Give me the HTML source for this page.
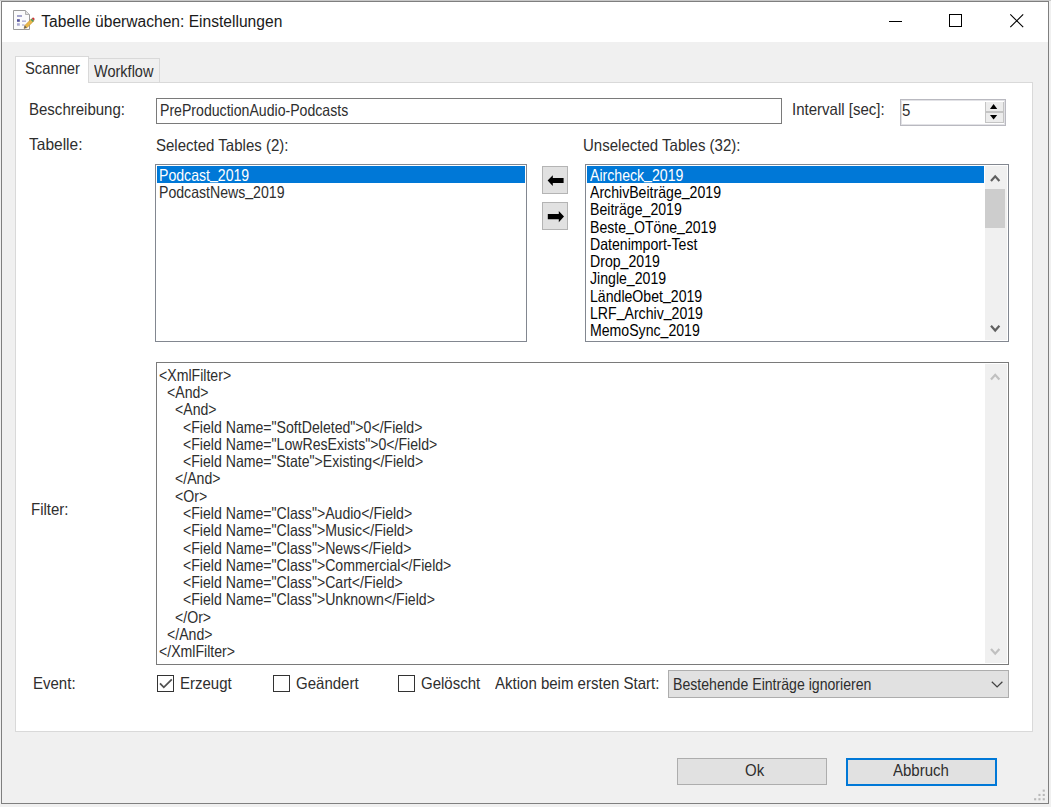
<!DOCTYPE html>
<html><head><meta charset="utf-8"><style>
html,body{margin:0;padding:0;}
body{width:1051px;height:807px;position:relative;overflow:hidden;background:#f0f0f0;font-family:"Liberation Sans",sans-serif;}
.t{position:absolute;white-space:pre;transform-origin:0 0;}
.b{position:absolute;}
.u{position:relative;top:-1.5px;}
</style></head><body>
<div class="b" style="left:0px;top:0px;width:1051px;height:1px;background:#c8c8c8;"></div>
<div class="b" style="left:1px;top:1px;width:1048px;height:803px;background:#f0f0f0;border:1px solid #7f7f7f;box-sizing:border-box;"></div>
<div class="b" style="left:2px;top:2px;width:1046px;height:40px;background:#fff;"></div>
<svg class="b" style="left:0px;top:0px" width="40" height="32" viewBox="0 0 40 32">
<path d="M13.5 10.5 H25.5 L29.5 14.5 V29.5 H13.5 Z" fill="#fbfbfb" stroke="#9a9a9a" stroke-width="1"/>
<path d="M25.5 10.5 V14.5 H29.5" fill="#e0e0e0" stroke="#b0b0b0" stroke-width="1"/>
<rect x="17" y="15.3" width="5" height="1.4" fill="#8080b8"/>
<rect x="17" y="19.2" width="2.8" height="2.6" fill="#50509a"/>
<rect x="22" y="20.6" width="4" height="1.1" fill="#9a9ac8"/>
<rect x="17" y="23.2" width="2.8" height="2.5" fill="#a8a8d0"/>
<rect x="22" y="24.5" width="2.5" height="1" fill="#9a9ac8"/>
<path d="M24 28.5 L24.8 25.5 L31.3 19 L33.5 21.2 L27 27.7 Z" fill="#e8b84a" stroke="#c89030" stroke-width="0.6"/>
<path d="M30.6 19.7 L31.8 18.5 L34 20.7 L32.8 21.9 Z" fill="#4a9a5a"/>
<path d="M31.8 18.5 L32.5 17.8 Q33.5 17.3 34.3 18.2 Q34.8 19.1 34.4 19.9 L34 20.7 Z" fill="#c83a3a"/>
<path d="M24 28.5 L24.8 25.5 L26.9 27.6 Z" fill="#606060"/>
</svg>
<div class="t" style="left:41.3px;top:13.79px;font-size:15.6px;line-height:15.6px;color:#1a1a1a;">Tabelle überwachen: Einstellungen</div>
<div class="b" style="left:889px;top:21px;width:13px;height:1px;background:#000;"></div>
<div class="b" style="left:949px;top:14px;width:13px;height:13px;background:transparent;border:1px solid #000;box-sizing:border-box;"></div>
<svg class="b" style="left:1009px;top:13px" width="16" height="16" viewBox="0 0 16 16"><path d="M1.3 1.3 L14.2 14.2 M14.2 1.3 L1.3 14.2" stroke="#000" stroke-width="1.1"/></svg>
<div class="b" style="left:88px;top:58px;width:72px;height:25px;background:#f0f0f0;border:1px solid #d9d9d9;box-sizing:border-box;"></div>
<div class="b" style="left:15px;top:82px;width:1018px;height:650px;background:#fff;border:1px solid #d9d9d9;box-sizing:border-box;"></div>
<div class="b" style="left:15px;top:56px;width:74px;height:27px;background:#fff;border:1px solid #d9d9d9;box-sizing:border-box;border-bottom:none;"></div>
<div class="t" style="left:25px;top:60.03px;font-size:16.5px;line-height:16.5px;color:#2e2e2e;transform:scaleX(0.895);">Scanner</div>
<div class="t" style="left:94px;top:62.83px;font-size:16.5px;line-height:16.5px;color:#2e2e2e;transform:scaleX(0.88);">Workflow</div>
<div class="t" style="left:29px;top:101.03px;font-size:16.5px;line-height:16.5px;color:#2e2e2e;transform:scaleX(0.91);">Beschreibung:</div>
<div class="b" style="left:156px;top:98px;width:626px;height:26px;background:#fff;border:1px solid #7a7a7a;box-sizing:border-box;"></div>
<div class="t" style="left:160.3px;top:102.33px;font-size:16.5px;line-height:16.5px;color:#2e2e2e;transform:scaleX(0.855);">PreProductionAudio-Podcasts</div>
<div class="t" style="left:792px;top:101.03px;font-size:16.5px;line-height:16.5px;color:#2e2e2e;transform:scaleX(0.91);">Intervall [sec]:</div>
<div class="b" style="left:900px;top:99px;width:106px;height:27px;background:#fff;border:1px solid #b9b9c0;box-sizing:border-box;"></div>
<div class="b" style="left:901px;top:100px;width:104px;height:25px;background:transparent;border:1px solid #e2e2e6;box-sizing:border-box;"></div>
<div class="t" style="left:902px;top:102.03px;font-size:16.5px;line-height:16.5px;color:#2e2e2e;transform:scaleX(0.91);">5</div>
<div class="b" style="left:985px;top:102px;width:19px;height:21px;background:#ececec;border:1px solid #c4c4c4;box-sizing:border-box;border-top:none;"></div>
<div class="b" style="left:986px;top:111px;width:17px;height:2px;background:#c4c4c4;"></div>
<svg class="b" style="left:985px;top:100px" width="19" height="24" viewBox="985 100 19 24"><path d="M990 109 L993.6 104 L997.2 109 Z" fill="#000"/><path d="M990 115 L993.6 119.6 L997.2 115 Z" fill="#000"/></svg>
<div class="t" style="left:29px;top:135.83px;font-size:16.5px;line-height:16.5px;color:#2e2e2e;transform:scaleX(0.94);">Tabelle:</div>
<div class="t" style="left:156px;top:137.03px;font-size:16.5px;line-height:16.5px;color:#2e2e2e;transform:scaleX(0.91);">Selected Tables (2):</div>
<div class="t" style="left:583px;top:137.33px;font-size:16.5px;line-height:16.5px;color:#2e2e2e;transform:scaleX(0.91);">Unselected Tables (32):</div>
<div class="b" style="left:155px;top:164px;width:372px;height:178px;background:#fff;border:1px solid #828790;box-sizing:border-box;"></div>
<div class="b" style="left:157px;top:166px;width:368px;height:17px;background:#0078d7;"></div>
<div class="t" style="left:159.4px;top:166.63px;font-size:16.5px;line-height:16.5px;color:#fff;transform:scaleX(0.855);">Podcast<span class="u">_</span>2019</div>
<div class="t" style="left:159.4px;top:183.93px;font-size:16.5px;line-height:16.5px;color:#2e2e2e;transform:scaleX(0.855);">PodcastNews<span class="u">_</span>2019</div>
<div class="b" style="left:542px;top:166px;width:26px;height:28px;background:#e1e1e1;border:1px solid #b4b4b4;box-sizing:border-box;"></div>
<div class="b" style="left:542px;top:202px;width:26px;height:28px;background:#e1e1e1;border:1px solid #b4b4b4;box-sizing:border-box;"></div>
<svg class="b" style="left:543px;top:167px" width="24" height="62" viewBox="543 167 24 62"><path d="M547.6 180.6 L552.8 175.2 V178.1 H563.6 V183.1 H552.8 V186 Z" fill="#000"/><path d="M564 216.6 L558.8 211 V214.1 H547.8 V219.2 H558.8 V222.2 Z" fill="#000"/></svg>
<div class="b" style="left:585px;top:164px;width:424px;height:178px;background:#fff;border:1px solid #828790;box-sizing:border-box;"></div>
<div class="b" style="left:587px;top:166px;width:397px;height:17px;background:#0078d7;"></div>
<div class="t" style="left:590.3px;top:166.63px;font-size:16.5px;line-height:16.5px;color:#fff;transform:scaleX(0.855);">Aircheck<span class="u">_</span>2019</div>
<div class="t" style="left:590.3px;top:183.92px;font-size:16.5px;line-height:16.5px;color:#000;transform:scaleX(0.855);">ArchivBeiträge<span class="u">_</span>2019</div>
<div class="t" style="left:590.3px;top:201.21px;font-size:16.5px;line-height:16.5px;color:#000;transform:scaleX(0.855);">Beiträge<span class="u">_</span>2019</div>
<div class="t" style="left:590.3px;top:218.50px;font-size:16.5px;line-height:16.5px;color:#000;transform:scaleX(0.855);">Beste<span class="u">_</span>OTöne<span class="u">_</span>2019</div>
<div class="t" style="left:590.3px;top:235.79px;font-size:16.5px;line-height:16.5px;color:#000;transform:scaleX(0.855);">Datenimport-Test</div>
<div class="t" style="left:590.3px;top:253.08px;font-size:16.5px;line-height:16.5px;color:#000;transform:scaleX(0.855);">Drop<span class="u">_</span>2019</div>
<div class="t" style="left:590.3px;top:270.37px;font-size:16.5px;line-height:16.5px;color:#000;transform:scaleX(0.855);">Jingle<span class="u">_</span>2019</div>
<div class="t" style="left:590.3px;top:287.66px;font-size:16.5px;line-height:16.5px;color:#000;transform:scaleX(0.855);">LändleObet<span class="u">_</span>2019</div>
<div class="t" style="left:590.3px;top:304.95px;font-size:16.5px;line-height:16.5px;color:#000;transform:scaleX(0.855);">LRF<span class="u">_</span>Archiv<span class="u">_</span>2019</div>
<div class="t" style="left:590.3px;top:322.24px;font-size:16.5px;line-height:16.5px;color:#000;transform:scaleX(0.855);">MemoSync<span class="u">_</span>2019</div>
<div class="b" style="left:985px;top:166px;width:22px;height:174px;background:#f0f0f0;"></div>
<div class="b" style="left:985px;top:189px;width:20px;height:39px;background:#cdcdcd;"></div>
<svg class="b" style="left:985px;top:166px" width="22" height="174" viewBox="985 166 22 174"><path d="M991 181 L995.2 176.3 L999.4 181" fill="none" stroke="#606060" stroke-width="2.2"/><path d="M991 325.8 L995.2 330.5 L999.4 325.8" fill="none" stroke="#606060" stroke-width="2.2"/></svg>
<div class="b" style="left:156px;top:362px;width:853px;height:303px;background:#fff;border:1px solid #7a7a7a;box-sizing:border-box;"></div>
<div class="b" style="left:985px;top:364px;width:22px;height:299px;background:#f0f0f0;"></div>
<svg class="b" style="left:985px;top:364px" width="22" height="299" viewBox="985 364 22 299"><path d="M991 379.5 L995.2 374.8 L999.4 379.5" fill="none" stroke="#c0c0c0" stroke-width="2.2"/><path d="M991 649 L995.2 653.7 L999.4 649" fill="none" stroke="#c0c0c0" stroke-width="2.2"/></svg>
<div class="t" style="left:159.4px;top:366.73px;font-size:16.5px;line-height:16.5px;color:#2e2e2e;transform:scaleX(0.855);">&lt;XmlFilter&gt;</div>
<div class="t" style="left:167.4px;top:384.01px;font-size:16.5px;line-height:16.5px;color:#2e2e2e;transform:scaleX(0.855);">&lt;And&gt;</div>
<div class="t" style="left:175.4px;top:401.29px;font-size:16.5px;line-height:16.5px;color:#2e2e2e;transform:scaleX(0.855);">&lt;And&gt;</div>
<div class="t" style="left:183.4px;top:418.57px;font-size:16.5px;line-height:16.5px;color:#2e2e2e;transform:scaleX(0.855);">&lt;Field Name=&quot;SoftDeleted&quot;&gt;0&lt;/Field&gt;</div>
<div class="t" style="left:183.4px;top:435.85px;font-size:16.5px;line-height:16.5px;color:#2e2e2e;transform:scaleX(0.855);">&lt;Field Name=&quot;LowResExists&quot;&gt;0&lt;/Field&gt;</div>
<div class="t" style="left:183.4px;top:453.13px;font-size:16.5px;line-height:16.5px;color:#2e2e2e;transform:scaleX(0.855);">&lt;Field Name=&quot;State&quot;&gt;Existing&lt;/Field&gt;</div>
<div class="t" style="left:175.4px;top:470.41px;font-size:16.5px;line-height:16.5px;color:#2e2e2e;transform:scaleX(0.855);">&lt;/And&gt;</div>
<div class="t" style="left:175.4px;top:487.69px;font-size:16.5px;line-height:16.5px;color:#2e2e2e;transform:scaleX(0.855);">&lt;Or&gt;</div>
<div class="t" style="left:183.4px;top:504.97px;font-size:16.5px;line-height:16.5px;color:#2e2e2e;transform:scaleX(0.855);">&lt;Field Name=&quot;Class&quot;&gt;Audio&lt;/Field&gt;</div>
<div class="t" style="left:183.4px;top:522.25px;font-size:16.5px;line-height:16.5px;color:#2e2e2e;transform:scaleX(0.855);">&lt;Field Name=&quot;Class&quot;&gt;Music&lt;/Field&gt;</div>
<div class="t" style="left:183.4px;top:539.53px;font-size:16.5px;line-height:16.5px;color:#2e2e2e;transform:scaleX(0.855);">&lt;Field Name=&quot;Class&quot;&gt;News&lt;/Field&gt;</div>
<div class="t" style="left:183.4px;top:556.81px;font-size:16.5px;line-height:16.5px;color:#2e2e2e;transform:scaleX(0.855);">&lt;Field Name=&quot;Class&quot;&gt;Commercial&lt;/Field&gt;</div>
<div class="t" style="left:183.4px;top:574.09px;font-size:16.5px;line-height:16.5px;color:#2e2e2e;transform:scaleX(0.855);">&lt;Field Name=&quot;Class&quot;&gt;Cart&lt;/Field&gt;</div>
<div class="t" style="left:183.4px;top:591.37px;font-size:16.5px;line-height:16.5px;color:#2e2e2e;transform:scaleX(0.855);">&lt;Field Name=&quot;Class&quot;&gt;Unknown&lt;/Field&gt;</div>
<div class="t" style="left:175.4px;top:608.65px;font-size:16.5px;line-height:16.5px;color:#2e2e2e;transform:scaleX(0.855);">&lt;/Or&gt;</div>
<div class="t" style="left:167.4px;top:625.93px;font-size:16.5px;line-height:16.5px;color:#2e2e2e;transform:scaleX(0.855);">&lt;/And&gt;</div>
<div class="t" style="left:159.4px;top:643.21px;font-size:16.5px;line-height:16.5px;color:#2e2e2e;transform:scaleX(0.855);">&lt;/XmlFilter&gt;</div>
<div class="t" style="left:31px;top:501.03px;font-size:16.5px;line-height:16.5px;color:#2e2e2e;transform:scaleX(0.91);">Filter:</div>
<div class="t" style="left:33px;top:674.53px;font-size:16.5px;line-height:16.5px;color:#2e2e2e;transform:scaleX(0.91);">Event:</div>
<div class="b" style="left:157px;top:675px;width:17px;height:17px;background:#fff;border:1px solid #333;box-sizing:border-box;"></div>
<div class="b" style="left:273px;top:675px;width:17px;height:17px;background:#fff;border:1px solid #333;box-sizing:border-box;"></div>
<div class="b" style="left:398px;top:675px;width:17px;height:17px;background:#fff;border:1px solid #333;box-sizing:border-box;"></div>
<svg class="b" style="left:157px;top:675px" width="18" height="18" viewBox="157 675 18 18"><path d="M160 683.4 L163.8 687.3 L171.8 679.3" fill="none" stroke="#505050" stroke-width="1.8"/></svg>
<div class="t" style="left:180px;top:674.53px;font-size:16.5px;line-height:16.5px;color:#2e2e2e;transform:scaleX(0.91);">Erzeugt</div>
<div class="t" style="left:296px;top:674.53px;font-size:16.5px;line-height:16.5px;color:#2e2e2e;transform:scaleX(0.91);">Geändert</div>
<div class="t" style="left:421px;top:674.53px;font-size:16.5px;line-height:16.5px;color:#2e2e2e;transform:scaleX(0.91);">Gelöscht</div>
<div class="t" style="left:495px;top:674.53px;font-size:16.5px;line-height:16.5px;color:#2e2e2e;transform:scaleX(0.91);">Aktion beim ersten Start:</div>
<div class="b" style="left:668px;top:670px;width:341px;height:28px;background:#e1e1e1;border:1px solid #adadad;box-sizing:border-box;"></div>
<div class="t" style="left:673px;top:675.73px;font-size:16.5px;line-height:16.5px;color:#2e2e2e;transform:scaleX(0.855);">Bestehende Einträge ignorieren</div>
<svg class="b" style="left:985px;top:675px" width="22" height="18" viewBox="985 675 22 18"><path d="M991.8 681.8 L997.1 686.9 L1002.4 681.8" fill="none" stroke="#404040" stroke-width="1.25"/></svg>
<div class="b" style="left:677px;top:758px;width:150px;height:27px;background:#e1e1e1;border:1px solid #adadad;box-sizing:border-box;"></div>
<div class="t" style="left:745px;top:762.03px;font-size:16.5px;line-height:16.5px;color:#2e2e2e;transform:scaleX(0.91);">Ok</div>
<div class="b" style="left:846px;top:758px;width:151px;height:28px;background:#e1e1e1;border:2px solid #0078d7;box-sizing:border-box;"></div>
<div class="t" style="left:893px;top:762.03px;font-size:16.5px;line-height:16.5px;color:#2e2e2e;transform:scaleX(0.91);">Abbruch</div>
<svg class="b" style="left:1030px;top:785px" width="18" height="18" viewBox="1030 785 18 18"><rect x="1034.1" y="798.2" width="2.1" height="2.1" fill="#b9b9b9"/><rect x="1038.4" y="798.2" width="2.1" height="2.1" fill="#b9b9b9"/><rect x="1042.7" y="798.2" width="2.1" height="2.1" fill="#b9b9b9"/><rect x="1038.4" y="793.9" width="2.1" height="2.1" fill="#b9b9b9"/><rect x="1042.7" y="793.9" width="2.1" height="2.1" fill="#b9b9b9"/><rect x="1042.7" y="789.6" width="2.1" height="2.1" fill="#b9b9b9"/></svg>
</body></html>
